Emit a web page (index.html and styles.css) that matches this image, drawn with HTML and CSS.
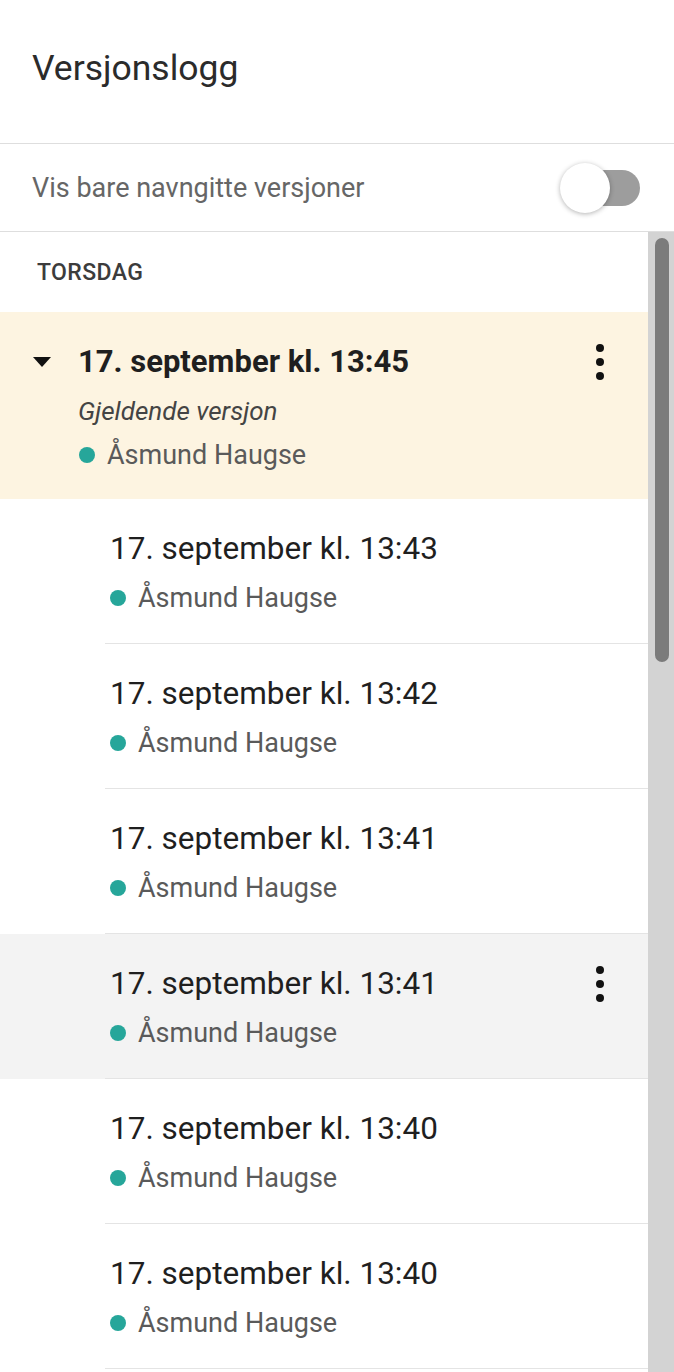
FILE: index.html
```html
<!DOCTYPE html>
<html lang="no">
<head>
<meta charset="utf-8">
<title>Versjonslogg</title>
<link rel="stylesheet" href="styles.css">
</head>
<body>
<div class="panel">
  <header class="panel-header">
    <h1 class="panel-title">Versjonslogg</h1>
  </header>
  <div class="filter-row">
    <span class="filter-label">Vis bare navngitte versjoner</span>
    <span class="toggle" role="switch" aria-checked="false">
      <span class="toggle-track"></span>
      <span class="toggle-thumb"></span>
    </span>
  </div>
  <div class="list-area">
    <div class="version-list">
      <div class="day-label">TORSDAG</div>

      <div class="version current">
        <svg class="caret" width="20" height="10" viewBox="0 0 20 10"><path d="M1 0h18L10 10z" fill="#111"/></svg>
        <div class="current-body">
          <div class="version-time">17. september kl. 13:45</div>
          <div class="version-name">Gjeldende versjon</div>
          <div class="author"><span class="author-dot"></span>Åsmund Haugse</div>
        </div>
        <button class="kebab" aria-label="Flere handlinger"><svg width="10" height="40" viewBox="0 0 10 40"><circle cx="5" cy="6" r="4"/><circle cx="5" cy="20" r="4"/><circle cx="5" cy="34" r="4"/></svg></button>
      </div>

      <div class="version">
        <div class="version-body">
          <div class="version-text">
            <div class="version-time">17. september kl. 13:43</div>
            <div class="author"><span class="author-dot"></span>Åsmund Haugse</div>
          </div>
        </div>
      </div>
      <div class="version">
        <div class="version-body">
          <div class="version-text">
            <div class="version-time">17. september kl. 13:42</div>
            <div class="author"><span class="author-dot"></span>Åsmund Haugse</div>
          </div>
        </div>
      </div>
      <div class="version">
        <div class="version-body">
          <div class="version-text">
            <div class="version-time">17. september kl. 13:41</div>
            <div class="author"><span class="author-dot"></span>Åsmund Haugse</div>
          </div>
        </div>
      </div>
      <div class="version hovered">
        <div class="version-body">
          <div class="version-text">
            <div class="version-time">17. september kl. 13:41</div>
            <div class="author"><span class="author-dot"></span>Åsmund Haugse</div>
          </div>
          <button class="kebab" aria-label="Flere handlinger"><svg width="10" height="40" viewBox="0 0 10 40"><circle cx="5" cy="6" r="4"/><circle cx="5" cy="20" r="4"/><circle cx="5" cy="34" r="4"/></svg></button>
        </div>
      </div>
      <div class="version">
        <div class="version-body">
          <div class="version-text">
            <div class="version-time">17. september kl. 13:40</div>
            <div class="author"><span class="author-dot"></span>Åsmund Haugse</div>
          </div>
        </div>
      </div>
      <div class="version">
        <div class="version-body">
          <div class="version-text">
            <div class="version-time">17. september kl. 13:40</div>
            <div class="author"><span class="author-dot"></span>Åsmund Haugse</div>
          </div>
        </div>
      </div>
    </div>
    <div class="scrollbar" aria-hidden="true">
      <div class="scrollbar-thumb"></div>
    </div>
  </div>
</div>
</body>
</html>
```
FILE: styles.css
```css
* {
  box-sizing: border-box;
}

html, body {
  margin: 0;
  padding: 0;
  height: 100%;
  background: #ffffff;
}

body {
  font-family: Roboto, "Noto Sans", Arial, sans-serif;
  color: #202124;
}

.panel {
  height: 100vh;
  display: flex;
  flex-direction: column;
  overflow: hidden;
}

.panel-header {
  flex: 0 0 144px;
  display: flex;
  align-items: center;
  padding: 0 32px 8px 32px;
  border-bottom: 1px solid #dedede;
}

.panel-title {
  margin: 0;
  font-size: 35.5px;
  font-weight: 400;
  line-height: 44px;
  color: #2b2b2b;
}

.filter-row {
  flex: 0 0 88px;
  display: flex;
  align-items: center;
  justify-content: space-between;
  padding: 0 34px 0 32px;
  border-bottom: 1px solid #dedede;
}

.filter-label {
  font-size: 27px;
  line-height: 36px;
  color: #666666;
}

.toggle {
  position: relative;
  width: 80px;
  height: 50px;
  display: block;
}

.toggle-track {
  position: absolute;
  right: 0;
  top: 7px;
  width: 64px;
  height: 36px;
  border-radius: 18px;
  background: #9d9d9d;
}

.toggle-thumb {
  position: absolute;
  left: 0;
  top: 0;
  width: 50px;
  height: 50px;
  border-radius: 50%;
  background: #ffffff;
  box-shadow: 0 1px 5px rgba(0, 0, 0, 0.3);
}

.list-area {
  flex: 1 1 auto;
  min-height: 0;
  display: flex;
}

.version-list {
  flex: 1 1 auto;
  min-width: 0;
  overflow: hidden;
}

.scrollbar {
  flex: 0 0 26px;
  background: #d3d3d3;
  padding: 6px 5px 0 7px;
}

.scrollbar-thumb {
  height: 424px;
  border-radius: 7px;
  background: #7b7b7b;
}

.day-label {
  height: 80px;
  display: flex;
  align-items: center;
  padding-left: 37px;
  font-size: 23px;
  font-weight: 500;
  letter-spacing: 0.4px;
  color: #3c3c3c;
}

.version {
  display: flex;
  align-items: flex-start;
}

.version.current {
  background: #fdf4e1;
  padding: 30px 0 24px 32px;
}

.version.hovered {
  background: #f3f3f3;
}

.caret {
  flex: 0 0 20px;
  margin-top: 15px;
  margin-right: 26px;
}

.current-body {
  flex: 1 1 auto;
}

.version-body {
  flex: 1 1 auto;
  display: flex;
  align-items: flex-start;
  margin-left: 105px;
  padding: 30px 0 25px 5px;
  border-bottom: 1px solid #e4e4e4;
}

.version-text {
  flex: 1 1 auto;
  min-width: 0;
}

.version-time {
  font-size: 31.5px;
  line-height: 40px;
  color: #1f1f1f;
  white-space: nowrap;
}

.current .version-time {
  font-weight: 700;
  font-size: 31px;
}

.version-name {
  margin-top: 13px;
  font-size: 26px;
  line-height: 32px;
  font-style: italic;
  color: #444444;
}

.author {
  display: flex;
  align-items: center;
  margin-top: 9px;
  font-size: 27px;
  line-height: 40px;
  color: #5a5a5a;
}

.current .author {
  margin-top: 8px;
}

.author-dot {
  width: 16px;
  height: 16px;
  border-radius: 50%;
  background: #26a69a;
  margin-right: 12px;
  flex: 0 0 16px;
}

.current .author-dot {
  margin-left: 1px;
}

.kebab {
  flex: 0 0 48px;
  height: 40px;
  margin-right: 24px;
  padding: 0;
  border: 0;
  background: transparent;
  display: flex;
  align-items: center;
  justify-content: center;
  fill: #111111;
}
```
